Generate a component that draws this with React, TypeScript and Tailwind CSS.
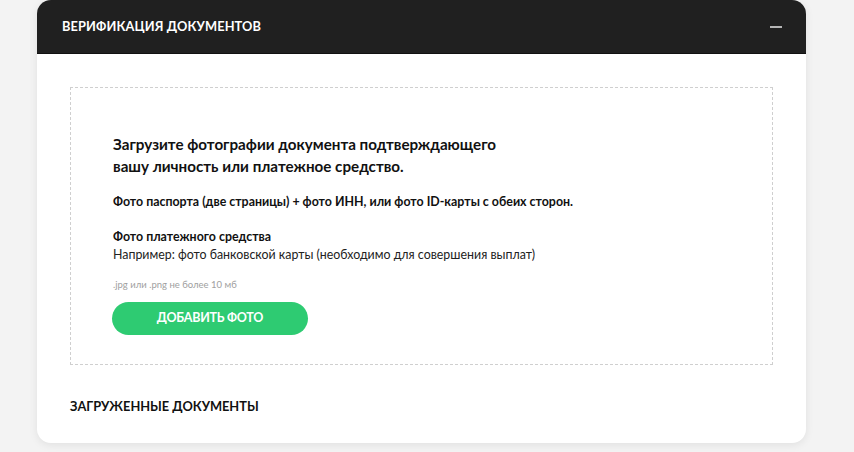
import React from "react";

export default function App() {
  return (
    <div className="min-h-[452px] w-full bg-[#f3f3f3] font-['Lato',_'Open_Sans',_sans-serif]">
      <div className="ml-[37px] w-[769px] rounded-[14px] bg-white pb-[28px] shadow-[0_2px_8px_rgba(0,0,0,0.08)]">
        <div className="flex h-[54px] items-center justify-between rounded-t-[14px] border-b border-[#111] bg-[#202020] pl-[25px] pr-[24px]">
          <h1 className="text-[12.8px] font-bold uppercase tracking-[0.01em] text-white">Верификация документов</h1>
          <span className="block h-[2px] w-[12px] bg-[#b5b5b5]" />
        </div>
        <div className="px-[33px] pt-[33px]">
          <div className="h-[278px] border border-dashed border-[#cfcfcf] pl-[41px] pt-[45px]">
            <p className="pl-[1px] text-[15.2px] font-bold leading-[22px] text-[#111]">
              Загрузите фотографии документа подтверждающего
              <br />
              вашу личность или платежное средство.
            </p>
            <div className="pl-[1px]">
              <p className="mt-[17px] text-[12.4px] font-bold leading-[16px] text-[#111]">
                Фото паспорта (две страницы) + фото ИНН, или фото ID-карты с обеих сторон.
              </p>
              <p className="mt-[19px] text-[12.4px] font-bold leading-[16px] text-[#111]">Фото платежного средства</p>
              <p className="mt-[2px] text-[12.4px] leading-[16px] text-[#222]">
                Например: фото банковской карты (необходимо для совершения выплат)
              </p>
              <p className="mt-[16px] text-[9.5px] leading-[12px] text-[#a0a0a0]">.jpg или .png не более 10 мб</p>
            </div>
            <button className="mt-[11px] flex h-[33px] w-[196px] items-center justify-center rounded-full bg-[#2ecb72] text-[12.5px] font-bold uppercase tracking-[-0.02em] text-white">
              Добавить фото
            </button>
          </div>
          <h2 className="mt-[32px] text-[12.8px] font-bold uppercase leading-[18px] text-[#111]">Загруженные документы</h2>
        </div>
      </div>
    </div>
  );
}
